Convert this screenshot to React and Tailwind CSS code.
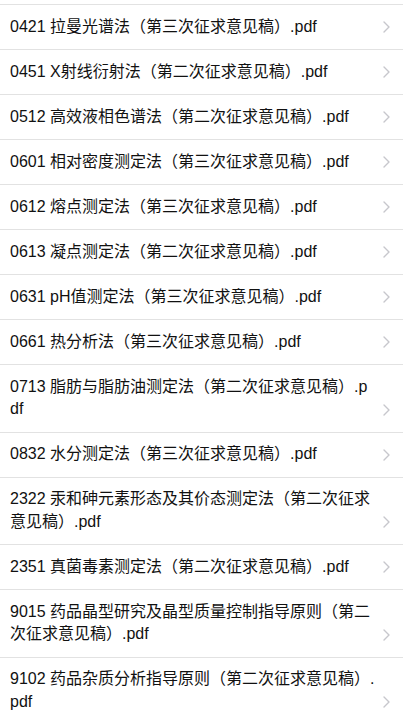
const files = [
  "0421 拉曼光谱法（第三次征求意见稿）.pdf",
  "0451 X射线衍射法（第二次征求意见稿）.pdf",
  "0512 高效液相色谱法（第二次征求意见稿）.pdf",
  "0601 相对密度测定法（第三次征求意见稿）.pdf",
  "0612 熔点测定法（第三次征求意见稿）.pdf",
  "0613 凝点测定法（第二次征求意见稿）.pdf",
  "0631 pH值测定法（第三次征求意见稿）.pdf",
  "0661 热分析法（第三次征求意见稿）.pdf",
  "0713 脂肪与脂肪油测定法（第二次征求意见稿）.pdf",
  "0832 水分测定法（第三次征求意见稿）.pdf",
  "2322 汞和砷元素形态及其价态测定法（第二次征求意见稿）.pdf",
  "2351 真菌毒素测定法（第二次征求意见稿）.pdf",
  "9015 药品晶型研究及晶型质量控制指导原则（第二次征求意见稿）.pdf",
  "9102 药品杂质分析指导原则（第二次征求意见稿）.pdf",
];

function Chevron() {
  return (
    <span className="ml-[8px] flex h-[22.5px] w-[7px] shrink-0 items-center">
      <svg width="7" height="12" viewBox="0 0 7 12" fill="none">
        <path d="M1 1l5 5-5 5" stroke="#c7c7cc" strokeWidth="1.4" strokeLinecap="round" strokeLinejoin="round" />
      </svg>
    </span>
  );
}

export default function App() {
  return (
    <div
      className="min-h-screen bg-white text-[16px] text-[#111]"
      style={{ fontFamily: '"Liberation Sans", "Noto Sans CJK SC", sans-serif' }}
    >
      <div className="h-[4px]" />
      <ul className="border-t border-[#e2e2e2]">
        {files.map((name) => (
          <li
            key={name}
            className="flex items-end border-b border-[#e2e2e2] py-[10.75px] pl-[10px] pr-[13px]"
          >
            <span className="min-w-0 flex-1 break-all leading-[22.5px]">{name}</span>
            <Chevron />
          </li>
        ))}
      </ul>
    </div>
  );
}
